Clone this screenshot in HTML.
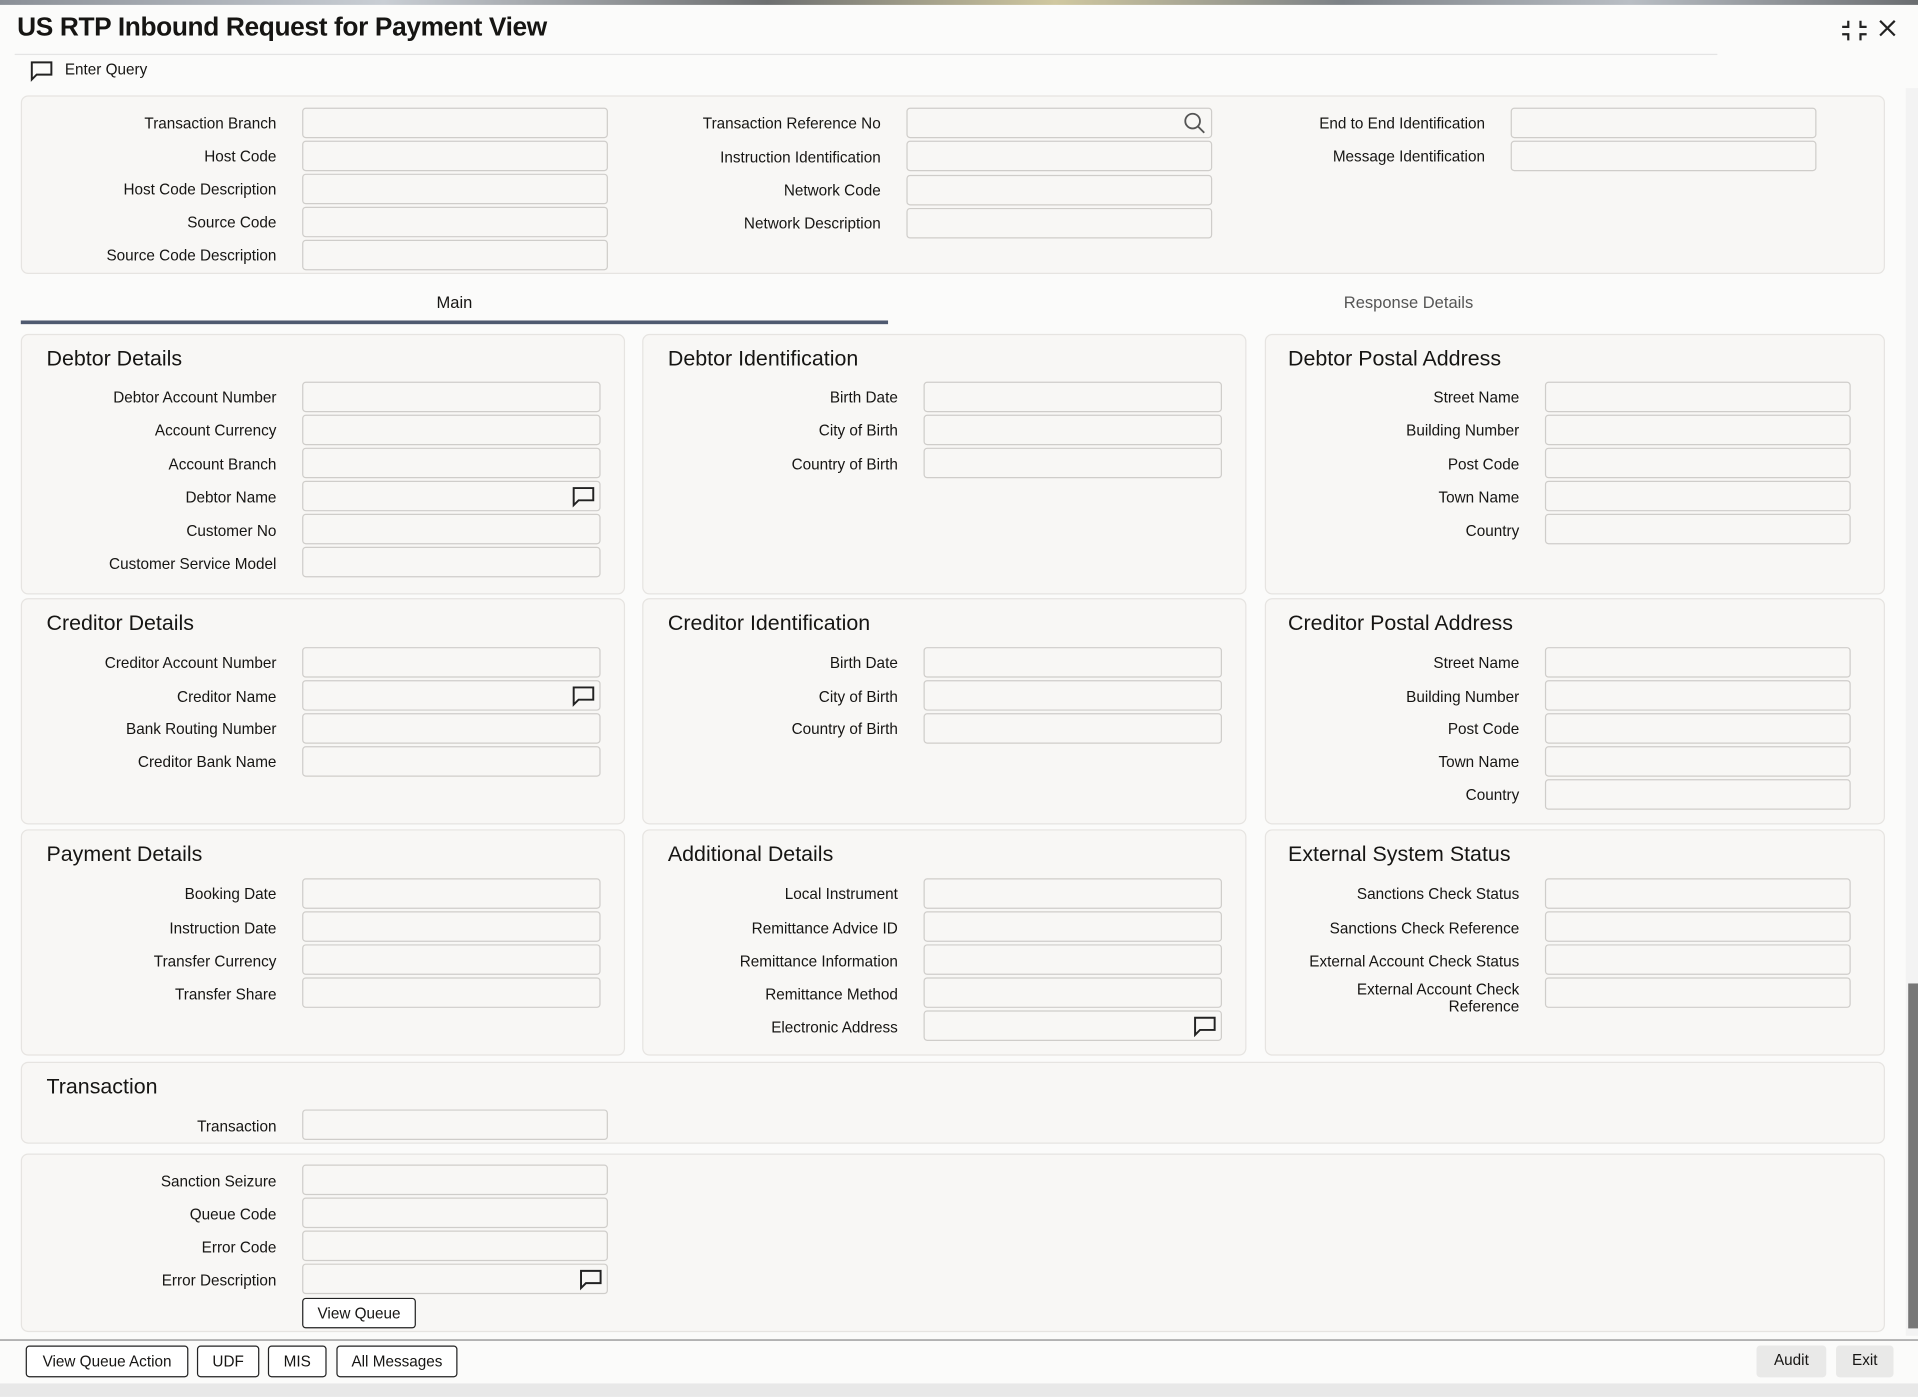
<!DOCTYPE html>
<html><head><meta charset="utf-8"><style>
html,body{margin:0;padding:0;width:1918px;height:1397px;overflow:hidden;background:#fafafa;}
#w{position:absolute;left:0;top:0;width:1568px;height:1142px;transform:scale(1.22321);transform-origin:0 0;font-family:"Liberation Sans",sans-serif;color:#161513;background:#fbfbfa;}
.a{position:absolute;}
.p{position:absolute;background:#f8f7f5;border:1px solid #e6e4e1;border-radius:6px;box-sizing:border-box;}
.l{position:absolute;font-size:12.5px;text-align:right;width:220px;line-height:14px;}
.i{position:absolute;height:25px;background:#f8f7f5;border:1px solid #cfcdca;border-radius:3px;box-sizing:border-box;}
.h{position:absolute;font-size:17.5px;}
.b{position:absolute;height:26px;border:1px solid #222;border-radius:3px;box-sizing:border-box;font-size:12.5px;line-height:24px;text-align:center;background:#fff;}
svg.c{position:absolute;}
</style></head><body><div id="w">
<div class="a" style="left:0;top:0;width:1568px;height:4px;background:linear-gradient(90deg,#8a8f96,#c9ced4 20%,#6d6f70 40%,#d0c8a0 55%,#7c8186 70%,#b9bec4 85%,#6a6d70);"></div>
<div class="a" style="left:14px;top:10px;font-size:21.5px;font-weight:bold;letter-spacing:-0.3px;">US RTP Inbound Request for Payment View</div>
<div class="a" style="left:12px;top:44px;width:1392px;height:1px;background:#e4e4e4;"></div>
<svg class="c" style="left:1505px;top:15px" width="22" height="20" viewBox="0 0 22 20" fill="none" stroke="#222" stroke-width="1.8"><path d="M6 2v5H1M16 2v5h5M6 18v-5H1M16 18v-5h5"/></svg>
<svg class="c" style="left:1536px;top:16px" width="14" height="14" viewBox="0 0 14 14" stroke="#222" stroke-width="1.8"><path d="M1 1l12 12M13 1L1 13"/></svg>
<svg class="c" style="left:24px;top:49px" width="20" height="18" viewBox="0 0 20 18" fill="none" stroke="#222" stroke-width="1.6"><path d="M2 2h16v10H6l-4 4z"/></svg>
<div class="a" style="left:53px;top:50px;font-size:12.5px;">Enter Query</div>

<div class="p" style="left:17px;top:78px;width:1524px;height:146px;"></div>
<div class="a" style="left:1558px;top:72px;width:10px;height:1020px;background:#f3f3f3;"></div>
<div class="a" style="left:1560px;top:804px;width:8px;height:282px;background:#777;"></div>

<div class="l" style="left:6px;top:94px">Transaction Branch</div><div class="i" style="left:247px;top:88px;width:250px"></div>
<div class="l" style="left:6px;top:121px">Host Code</div><div class="i" style="left:247px;top:115px;width:250px"></div>
<div class="l" style="left:6px;top:148px">Host Code Description</div><div class="i" style="left:247px;top:142px;width:250px"></div>
<div class="l" style="left:6px;top:175px">Source Code</div><div class="i" style="left:247px;top:169px;width:250px"></div>
<div class="l" style="left:6px;top:202px">Source Code Description</div><div class="i" style="left:247px;top:196px;width:250px"></div>
<div class="l" style="left:500px;top:94px">Transaction Reference No</div><div class="i" style="left:741px;top:88px;width:250px"></div>
<svg class="c" style="left:967px;top:91px" width="20" height="20" viewBox="0 0 20 20" fill="none" stroke="#555" stroke-width="1.5"><circle cx="8" cy="8" r="6"/><path d="M12.5 12.5l5 5"/></svg>
<div class="l" style="left:500px;top:122px">Instruction Identification</div><div class="i" style="left:741px;top:115px;width:250px"></div>
<div class="l" style="left:500px;top:149px">Network Code</div><div class="i" style="left:741px;top:143px;width:250px"></div>
<div class="l" style="left:500px;top:176px">Network Description</div><div class="i" style="left:741px;top:170px;width:250px"></div>
<div class="l" style="left:994px;top:94px">End to End Identification</div><div class="i" style="left:1235px;top:88px;width:250px"></div>
<div class="l" style="left:994px;top:121px">Message Identification</div><div class="i" style="left:1235px;top:115px;width:250px"></div>

<div class="a" style="left:17px;top:240px;width:709px;text-align:center;font-size:13.5px;">Main</div>
<div class="a" style="left:17px;top:262px;width:709px;height:3px;background:#4f5a70;"></div>
<div class="a" style="left:797px;top:240px;width:709px;text-align:center;font-size:13.5px;color:#555;">Response Details</div>

<div class="p" style="left:17px;top:273px;width:494px;height:213px"></div>
<div class="p" style="left:525px;top:273px;width:494px;height:213px"></div>
<div class="p" style="left:1034px;top:273px;width:507px;height:213px"></div>
<div class="p" style="left:17px;top:489px;width:494px;height:185px"></div>
<div class="p" style="left:525px;top:489px;width:494px;height:185px"></div>
<div class="p" style="left:1034px;top:489px;width:507px;height:185px"></div>
<div class="p" style="left:17px;top:678px;width:494px;height:185px"></div>
<div class="p" style="left:525px;top:678px;width:494px;height:185px"></div>
<div class="p" style="left:1034px;top:678px;width:507px;height:185px"></div>
<div class="p" style="left:17px;top:868px;width:1524px;height:67px"></div>
<div class="p" style="left:17px;top:943px;width:1524px;height:146px"></div>

<div class="h" style="left:38px;top:283px">Debtor Details</div>
<div class="h" style="left:546px;top:283px">Debtor Identification</div>
<div class="h" style="left:1053px;top:283px">Debtor Postal Address</div>
<div class="h" style="left:38px;top:499px">Creditor Details</div>
<div class="h" style="left:546px;top:499px">Creditor Identification</div>
<div class="h" style="left:1053px;top:499px">Creditor Postal Address</div>
<div class="h" style="left:38px;top:688px">Payment Details</div>
<div class="h" style="left:546px;top:688px">Additional Details</div>
<div class="h" style="left:1053px;top:688px">External System Status</div>
<div class="h" style="left:38px;top:878px">Transaction</div>

<div class="l" style="left:6px;top:318px">Debtor Account Number</div><div class="i" style="left:247px;top:312px;width:244px"></div>
<div class="l" style="left:6px;top:345px">Account Currency</div><div class="i" style="left:247px;top:339px;width:244px"></div>
<div class="l" style="left:6px;top:373px">Account Branch</div><div class="i" style="left:247px;top:366px;width:244px"></div>
<div class="l" style="left:6px;top:400px">Debtor Name</div><div class="i" style="left:247px;top:393px;width:244px"></div>
<div class="l" style="left:6px;top:427px">Customer No</div><div class="i" style="left:247px;top:420px;width:244px"></div>
<div class="l" style="left:6px;top:454px">Customer Service Model</div><div class="i" style="left:247px;top:447px;width:244px"></div>
<div class="l" style="left:514px;top:318px">Birth Date</div><div class="i" style="left:755px;top:312px;width:244px"></div>
<div class="l" style="left:514px;top:345px">City of Birth</div><div class="i" style="left:755px;top:339px;width:244px"></div>
<div class="l" style="left:514px;top:373px">Country of Birth</div><div class="i" style="left:755px;top:366px;width:244px"></div>
<div class="l" style="left:1022px;top:318px">Street Name</div><div class="i" style="left:1263px;top:312px;width:250px"></div>
<div class="l" style="left:1022px;top:345px">Building Number</div><div class="i" style="left:1263px;top:339px;width:250px"></div>
<div class="l" style="left:1022px;top:373px">Post Code</div><div class="i" style="left:1263px;top:366px;width:250px"></div>
<div class="l" style="left:1022px;top:400px">Town Name</div><div class="i" style="left:1263px;top:393px;width:250px"></div>
<div class="l" style="left:1022px;top:427px">Country</div><div class="i" style="left:1263px;top:420px;width:250px"></div>
<div class="l" style="left:6px;top:535px">Creditor Account Number</div><div class="i" style="left:247px;top:529px;width:244px"></div>
<div class="l" style="left:6px;top:563px">Creditor Name</div><div class="i" style="left:247px;top:556px;width:244px"></div>
<div class="l" style="left:6px;top:589px">Bank Routing Number</div><div class="i" style="left:247px;top:583px;width:244px"></div>
<div class="l" style="left:6px;top:616px">Creditor Bank Name</div><div class="i" style="left:247px;top:610px;width:244px"></div>
<div class="l" style="left:514px;top:535px">Birth Date</div><div class="i" style="left:755px;top:529px;width:244px"></div>
<div class="l" style="left:514px;top:563px">City of Birth</div><div class="i" style="left:755px;top:556px;width:244px"></div>
<div class="l" style="left:514px;top:589px">Country of Birth</div><div class="i" style="left:755px;top:583px;width:244px"></div>
<div class="l" style="left:1022px;top:535px">Street Name</div><div class="i" style="left:1263px;top:529px;width:250px"></div>
<div class="l" style="left:1022px;top:563px">Building Number</div><div class="i" style="left:1263px;top:556px;width:250px"></div>
<div class="l" style="left:1022px;top:589px">Post Code</div><div class="i" style="left:1263px;top:583px;width:250px"></div>
<div class="l" style="left:1022px;top:616px">Town Name</div><div class="i" style="left:1263px;top:610px;width:250px"></div>
<div class="l" style="left:1022px;top:643px">Country</div><div class="i" style="left:1263px;top:637px;width:250px"></div>
<div class="l" style="left:6px;top:724px">Booking Date</div><div class="i" style="left:247px;top:718px;width:244px"></div>
<div class="l" style="left:6px;top:752px">Instruction Date</div><div class="i" style="left:247px;top:745px;width:244px"></div>
<div class="l" style="left:6px;top:779px">Transfer Currency</div><div class="i" style="left:247px;top:772px;width:244px"></div>
<div class="l" style="left:6px;top:806px">Transfer Share</div><div class="i" style="left:247px;top:799px;width:244px"></div>
<div class="l" style="left:514px;top:724px">Local Instrument</div><div class="i" style="left:755px;top:718px;width:244px"></div>
<div class="l" style="left:514px;top:752px">Remittance Advice ID</div><div class="i" style="left:755px;top:745px;width:244px"></div>
<div class="l" style="left:514px;top:779px">Remittance Information</div><div class="i" style="left:755px;top:772px;width:244px"></div>
<div class="l" style="left:514px;top:806px">Remittance Method</div><div class="i" style="left:755px;top:799px;width:244px"></div>
<div class="l" style="left:514px;top:833px">Electronic Address</div><div class="i" style="left:755px;top:826px;width:244px"></div>
<div class="l" style="left:1022px;top:724px">Sanctions Check Status</div><div class="i" style="left:1263px;top:718px;width:250px"></div>
<div class="l" style="left:1022px;top:752px">Sanctions Check Reference</div><div class="i" style="left:1263px;top:745px;width:250px"></div>
<div class="l" style="left:1022px;top:779px">External Account Check Status</div><div class="i" style="left:1263px;top:772px;width:250px"></div>
<div class="l" style="left:1022px;top:802px">External Account Check<br>Reference</div><div class="i" style="left:1263px;top:799px;width:250px"></div>
<div class="l" style="left:6px;top:914px">Transaction</div><div class="i" style="left:247px;top:907px;width:250px"></div>
<div class="l" style="left:6px;top:959px">Sanction Seizure</div><div class="i" style="left:247px;top:952px;width:250px"></div>
<div class="l" style="left:6px;top:986px">Queue Code</div><div class="i" style="left:247px;top:979px;width:250px"></div>
<div class="l" style="left:6px;top:1013px">Error Code</div><div class="i" style="left:247px;top:1006px;width:250px"></div>
<div class="l" style="left:6px;top:1040px">Error Description</div><div class="i" style="left:247px;top:1033px;width:250px"></div>
<div class="b" style="left:247px;top:1061px;width:93px;height:25px">View Queue</div>

<svg class="c" style="left:467px;top:397px" width="20" height="18" viewBox="0 0 20 18" fill="none" stroke="#222" stroke-width="1.6"><path d="M2 2h16v10H6l-4 4z"/></svg>
<svg class="c" style="left:467px;top:560px" width="20" height="18" viewBox="0 0 20 18" fill="none" stroke="#222" stroke-width="1.6"><path d="M2 2h16v10H6l-4 4z"/></svg>
<svg class="c" style="left:975px;top:830px" width="20" height="18" viewBox="0 0 20 18" fill="none" stroke="#222" stroke-width="1.6"><path d="M2 2h16v10H6l-4 4z"/></svg>
<svg class="c" style="left:473px;top:1037px" width="20" height="18" viewBox="0 0 20 18" fill="none" stroke="#222" stroke-width="1.6"><path d="M2 2h16v10H6l-4 4z"/></svg>

<div class="a" style="left:0;top:1095px;width:1568px;height:1px;background:#8a8a8a;"></div>
<div class="b" style="left:21px;top:1100px;width:133px">View Queue Action</div>
<div class="b" style="left:161px;top:1100px;width:51px">UDF</div>
<div class="b" style="left:219px;top:1100px;width:48px">MIS</div>
<div class="b" style="left:275px;top:1100px;width:99px">All Messages</div>
<div class="b" style="left:1436px;top:1100px;width:57px;border:none;background:#e9e9e8">Audit</div>
<div class="b" style="left:1501px;top:1100px;width:47px;border:none;background:#e9e9e8">Exit</div>
<div class="a" style="left:0;top:1131px;width:1568px;height:11px;background:#e8e8e8;"></div>
</div></body></html>
